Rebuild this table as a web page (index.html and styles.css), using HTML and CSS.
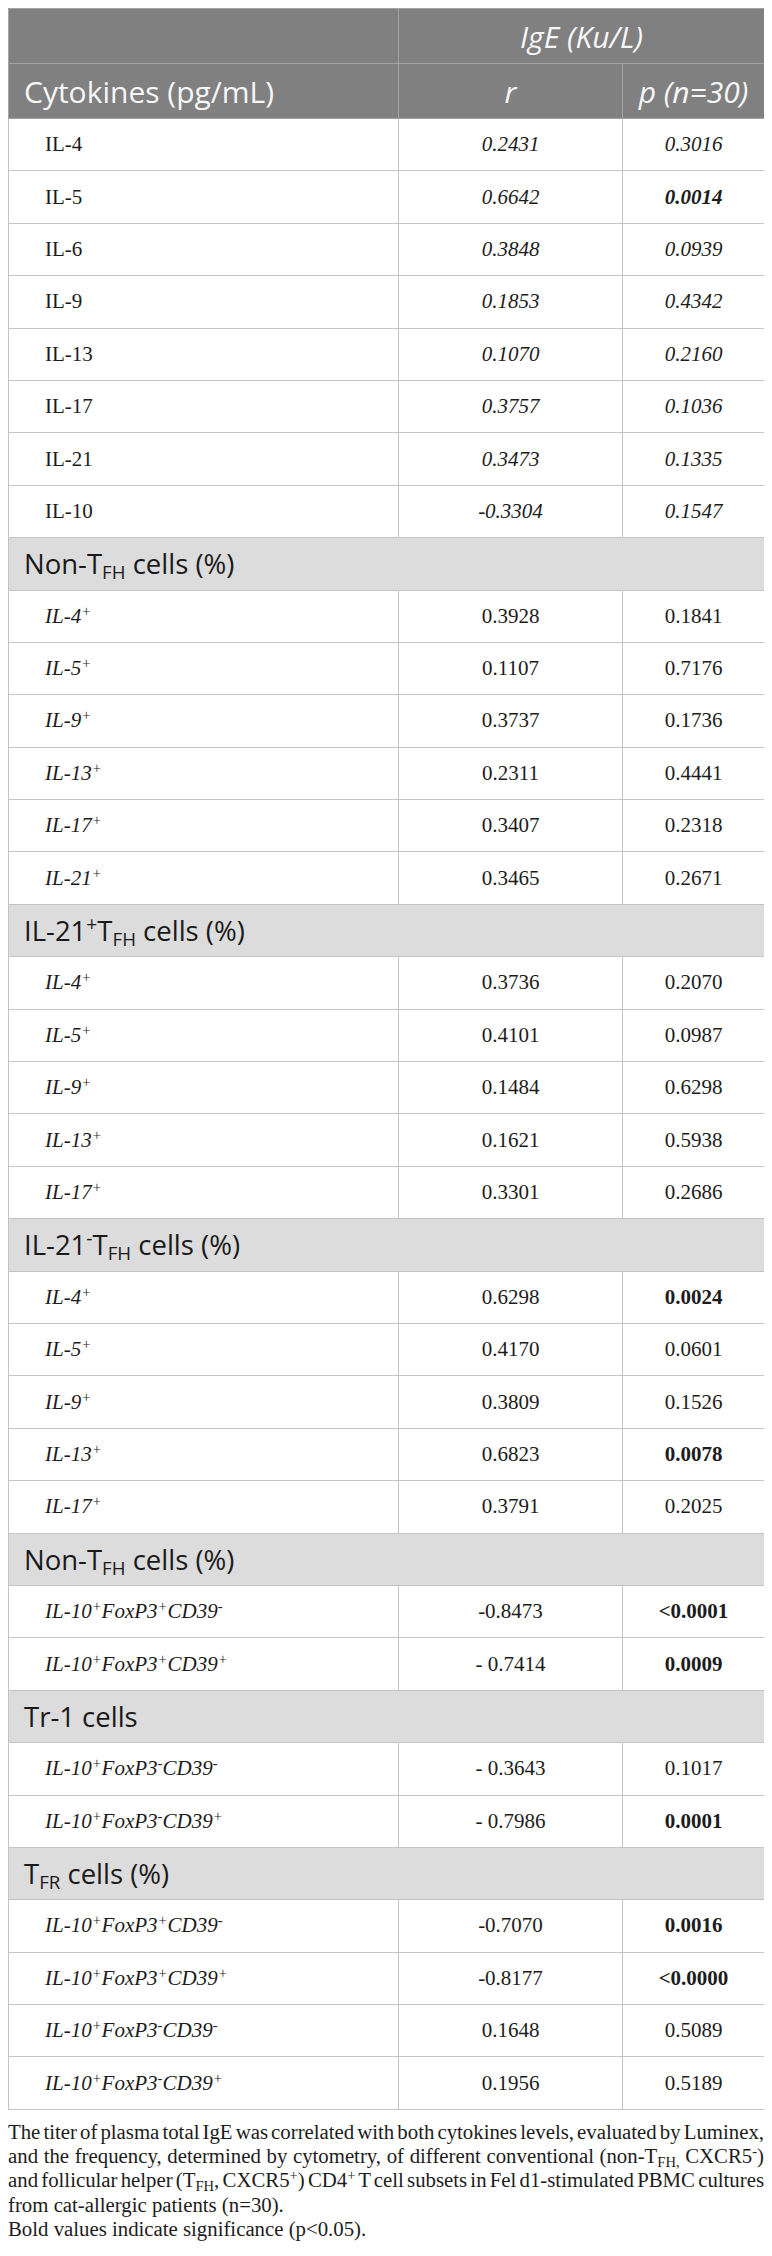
FILE: index.html
```html
<!DOCTYPE html>
<html lang="en">
<head>
  <meta charset="UTF-8" />
  <meta name="viewport" content="width=device-width, initial-scale=1.0"/>
  <title>IgE correlation table</title>
  <link rel="stylesheet" href="styles.css">
</head>
<body>

  <table class="corr-table">
    <colgroup>
      <col class="col-label">
      <col class="col-r">
      <col class="col-p">
    </colgroup>
    <thead>
      <tr>
        <th></th>
        <th colspan="2" class="center"><i>IgE (Ku/L)</i></th>
      </tr>
      <tr>
        <th class="left">Cytokines (pg/mL)</th>
        <th class="center"><i>r</i></th>
        <th class="center"><i>p (n=30)</i></th>
      </tr>
    </thead>
    <tbody>
      <!-- cytokine levels: values set in italics -->
      <tr class="it"><td>IL-4</td><td>0.2431</td><td>0.3016</td></tr>
      <tr class="it"><td>IL-5</td><td>0.6642</td><td><b>0.0014</b></td></tr>
      <tr class="it"><td>IL-6</td><td>0.3848</td><td>0.0939</td></tr>
      <tr class="it"><td>IL-9</td><td>0.1853</td><td>0.4342</td></tr>
      <tr class="it"><td>IL-13</td><td>0.1070</td><td>0.2160</td></tr>
      <tr class="it"><td>IL-17</td><td>0.3757</td><td>0.1036</td></tr>
      <tr class="it"><td>IL-21</td><td>0.3473</td><td>0.1335</td></tr>
      <tr class="it"><td>IL-10</td><td>-0.3304</td><td>0.1547</td></tr>

      <tr class="section"><td colspan="3">Non-T<sub>FH</sub> cells (%)</td></tr>
      <tr><td><i>IL-4<sup>+</sup></i></td><td>0.3928</td><td>0.1841</td></tr>
      <tr><td><i>IL-5<sup>+</sup></i></td><td>0.1107</td><td>0.7176</td></tr>
      <tr><td><i>IL-9<sup>+</sup></i></td><td>0.3737</td><td>0.1736</td></tr>
      <tr><td><i>IL-13<sup>+</sup></i></td><td>0.2311</td><td>0.4441</td></tr>
      <tr><td><i>IL-17<sup>+</sup></i></td><td>0.3407</td><td>0.2318</td></tr>
      <tr><td><i>IL-21<sup>+</sup></i></td><td>0.3465</td><td>0.2671</td></tr>

      <tr class="section"><td colspan="3">IL-21<sup>+</sup>T<sub>FH</sub> cells (%)</td></tr>
      <tr><td><i>IL-4<sup>+</sup></i></td><td>0.3736</td><td>0.2070</td></tr>
      <tr><td><i>IL-5<sup>+</sup></i></td><td>0.4101</td><td>0.0987</td></tr>
      <tr><td><i>IL-9<sup>+</sup></i></td><td>0.1484</td><td>0.6298</td></tr>
      <tr><td><i>IL-13<sup>+</sup></i></td><td>0.1621</td><td>0.5938</td></tr>
      <tr><td><i>IL-17<sup>+</sup></i></td><td>0.3301</td><td>0.2686</td></tr>

      <tr class="section"><td colspan="3">IL-21<sup>-</sup>T<sub>FH</sub> cells (%)</td></tr>
      <tr><td><i>IL-4<sup>+</sup></i></td><td>0.6298</td><td><b>0.0024</b></td></tr>
      <tr><td><i>IL-5<sup>+</sup></i></td><td>0.4170</td><td>0.0601</td></tr>
      <tr><td><i>IL-9<sup>+</sup></i></td><td>0.3809</td><td>0.1526</td></tr>
      <tr><td><i>IL-13<sup>+</sup></i></td><td>0.6823</td><td><b>0.0078</b></td></tr>
      <tr><td><i>IL-17<sup>+</sup></i></td><td>0.3791</td><td>0.2025</td></tr>

      <tr class="section"><td colspan="3">Non-T<sub>FH</sub> cells (%)</td></tr>
      <tr><td><i>IL-10<sup>+</sup>FoxP3<sup>+</sup>CD39<sup>-</sup></i></td><td>-0.8473</td><td><b>&lt;0.0001</b></td></tr>
      <tr><td><i>IL-10<sup>+</sup>FoxP3<sup>+</sup>CD39<sup>+</sup></i></td><td>- 0.7414</td><td><b>0.0009</b></td></tr>

      <tr class="section"><td colspan="3">Tr-1 cells</td></tr>
      <tr><td><i>IL-10<sup>+</sup>FoxP3<sup>-</sup>CD39<sup>-</sup></i></td><td>- 0.3643</td><td>0.1017</td></tr>
      <tr><td><i>IL-10<sup>+</sup>FoxP3<sup>-</sup>CD39<sup>+</sup></i></td><td>- 0.7986</td><td><b>0.0001</b></td></tr>

      <tr class="section"><td colspan="3">T<sub>FR</sub> cells (%)</td></tr>
      <tr><td><i>IL-10<sup>+</sup>FoxP3<sup>+</sup>CD39<sup>-</sup></i></td><td>-0.7070</td><td><b>0.0016</b></td></tr>
      <tr><td><i>IL-10<sup>+</sup>FoxP3<sup>+</sup>CD39<sup>+</sup></i></td><td>-0.8177</td><td><b>&lt;0.0000</b></td></tr>
      <tr><td><i>IL-10<sup>+</sup>FoxP3<sup>-</sup>CD39<sup>-</sup></i></td><td>0.1648</td><td>0.5089</td></tr>
      <tr><td><i>IL-10<sup>+</sup>FoxP3<sup>-</sup>CD39<sup>+</sup></i></td><td>0.1956</td><td>0.5189</td></tr>
    </tbody>
  </table>

  <div class="caption">
    <span class="jline">The titer of plasma total IgE was correlated with both cytokines levels, evaluated by Luminex,</span>
    <span class="jline">and the frequency, determined by cytometry, of different conventional (non-T<sub>FH,</sub> CXCR5<sup>-</sup>)</span>
    <span class="jline">and follicular helper (T<sub>FH</sub>, CXCR5<sup>+</sup>) CD4<sup>+</sup> T cell subsets in Fel d1-stimulated PBMC cultures</span>
    <span class="line">from cat-allergic patients (n=30).</span>
    <span class="line">Bold values indicate significance (p&lt;0.05).</span>
  </div>

</body>
</html>
```

FILE: styles.css
```css
body {
  margin: 8px;
  background: #ffffff;
  color: #1c1c1c;
  font-family: 'Liberation Serif', 'Times New Roman', serif;
}

.corr-table {
  width: 756px;
  border-collapse: collapse;
  table-layout: fixed;
  border: 1px solid #c4c4c4;
}

.col-label { width: 390px; }
.col-r { width: 224px; }
.col-p { width: 142px; }

/* header block */
.corr-table th {
  background: #808080;
  color: #f7f7f7;
  font-family: 'Open Sans', 'Noto Sans', sans-serif;
  font-weight: 400;
  font-size: 30px;
  height: 54px;
  padding: 0;
  border: 1px solid #a3a3a3;
}

.corr-table th.left {
  text-align: left;
  padding-left: 15px;
}

.corr-table th.center {
  text-align: center;
}

/* data rows */
.corr-table td {
  height: 51.4px;
  padding: 0;
  border: 1px solid #c4c4c4;
  font-size: 21px;
  text-align: center;
  vertical-align: middle;
}

.corr-table td:first-child {
  text-align: left;
  padding-left: 36px;
}

.corr-table tr.it td {
  font-style: italic;
}

.corr-table tr.it td:first-child {
  font-style: normal;
}

.corr-table td b {
  font-weight: 700;
}

.corr-table tr.section td {
  background: #dcdcdc;
  font-family: 'Open Sans', 'Noto Sans', sans-serif;
  font-size: 27.5px;
  color: #1a1a1a;
  text-align: left;
  padding-left: 15px;
}

sup {
  font-size: 0.7em;
  vertical-align: 0.5em;
  line-height: 0;
}

sub {
  font-size: 0.68em;
  vertical-align: -0.25em;
  line-height: 0;
}

.caption {
  margin-top: 10px;
  font-size: 20.8px;
  line-height: 24.3px;
  color: #1c1c1c;
}

.caption .jline {
  display: block;
  white-space: nowrap;
  word-spacing: -3px;
  text-align: justify;
  text-align-last: justify;
}

.caption .line {
  display: block;
}

.caption sub {
  font-size: 0.7em;
}
```
